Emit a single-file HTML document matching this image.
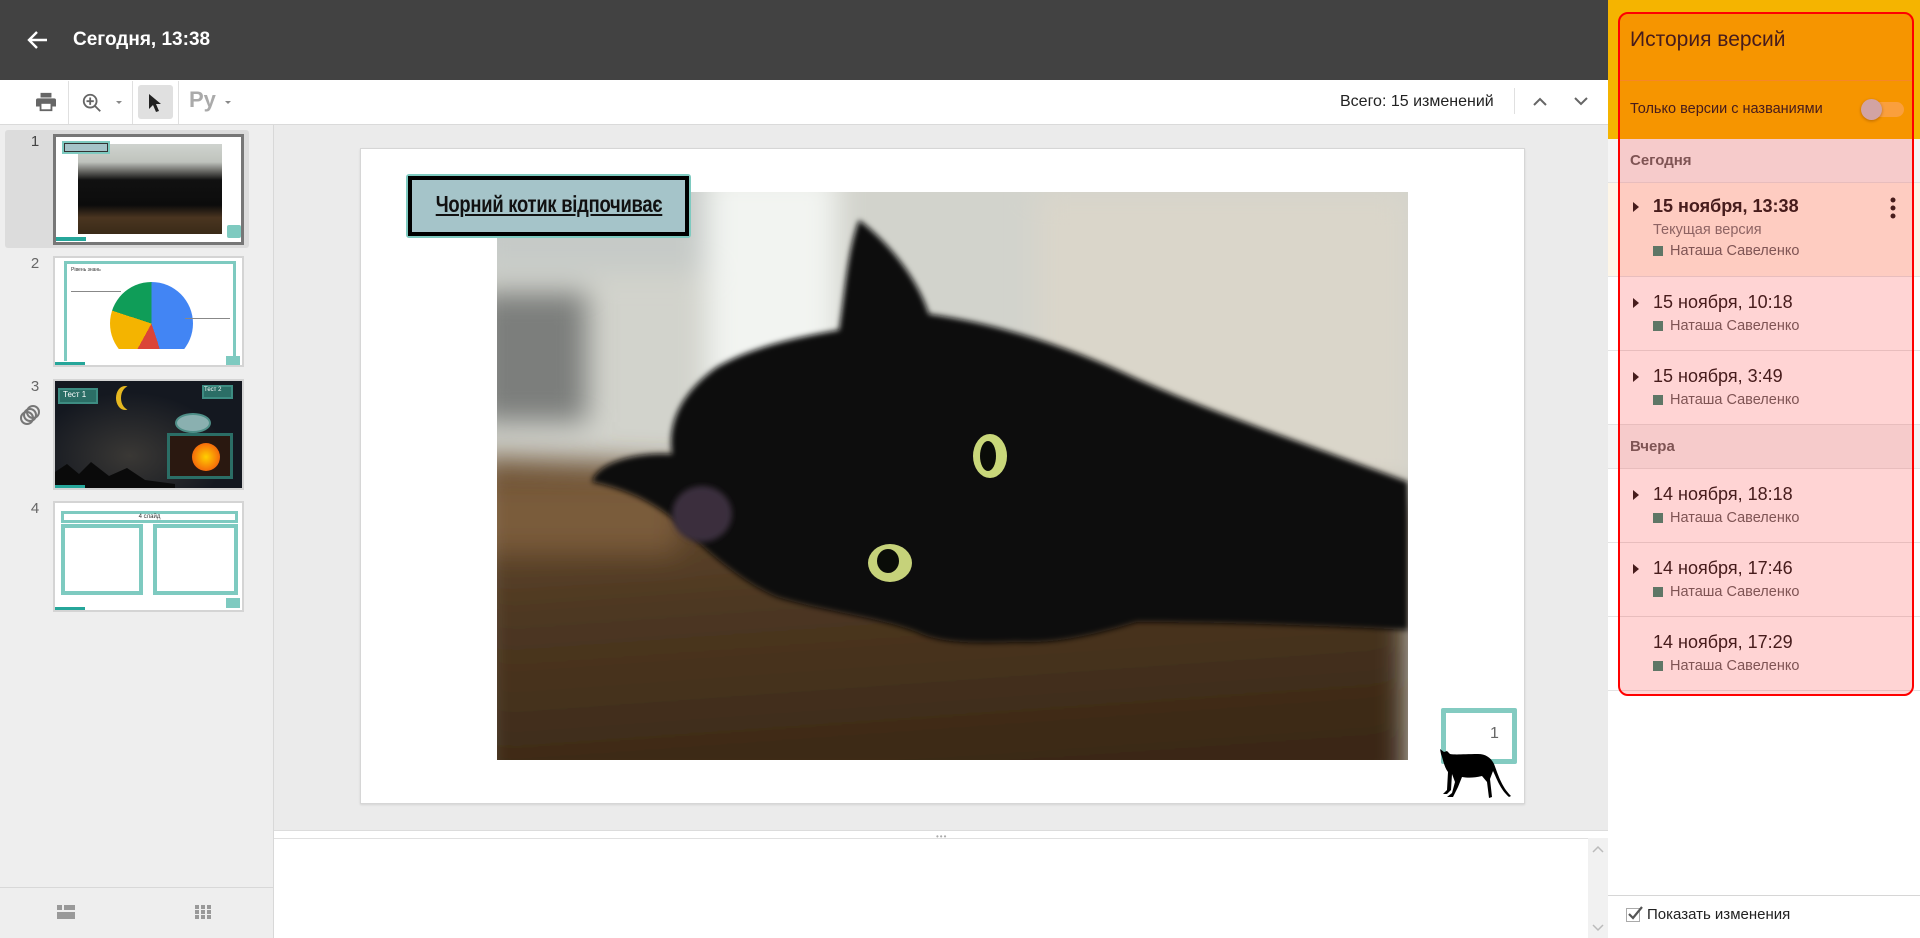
<!DOCTYPE html>
<html><head><meta charset="utf-8">
<style>
*{box-sizing:border-box;margin:0;padding:0}
body{width:1920px;height:938px;overflow:hidden;position:relative;font-family:"Liberation Sans",Arial,sans-serif;background:#fff}
.a{position:absolute}
.top{left:0;top:0;width:1608px;height:80px;background:#424242}
.title{left:73px;top:29px;color:#fff;font-size:19px;font-weight:bold}
.tb{left:0;top:80px;width:1608px;height:45px;background:#fff;border-bottom:1px solid #dadada}
.sep{width:1px;background:#e0e0e0}
.left{left:0;top:125px;width:274px;height:813px;background:#eeeeee;border-right:1px solid #d8d8d8}
.main{left:274px;top:125px;width:1334px;height:705px;background:#ebebeb}
.num{font-size:15px;color:#444;width:20px;text-align:center}
.th{left:53px;width:191px;height:111px;background:#fff;border:2px solid #d4d4d4;overflow:hidden}
.rp{left:1608px;top:0;width:312px;height:938px;background:#fff}
.row{position:absolute;left:1608px;width:312px;border-bottom:1px solid #e4e4e4}
.dt{position:absolute;left:45px;font-size:18px;color:#222}
.nm{position:absolute;left:45px;font-size:14.5px;color:#666}
.sq:before{content:"";display:inline-block;width:10px;height:10px;background:#3f8f7b;margin-right:7px;vertical-align:-1px}
.tri{position:absolute;left:25px;width:0;height:0;border-top:5px solid transparent;border-bottom:5px solid transparent;border-left:6px solid #222}
</style></head><body>

<div class="a top"></div>
<svg class="a" style="left:26px;top:30px" width="22" height="20" viewBox="0 0 22 20"><path d="M21 10H3M11 2L3 10l8 8" stroke="#fff" stroke-width="2.4" fill="none"/></svg>
<div class="a title">Сегодня, 13:38</div>

<div class="a tb"></div>
<svg class="a" style="left:35px;top:92px" width="22" height="20" viewBox="0 0 24 22"><path d="M6 1h12v5H6z M3 7h18a2 2 0 0 1 2 2v7h-4v5H5v-5H1V9a2 2 0 0 1 2-2z" fill="#666"/><rect x="7" y="13" width="10" height="6" fill="#fff"/></svg>
<div class="a sep" style="left:68px;top:81px;height:43px"></div>
<svg class="a" style="left:81px;top:92px" width="22" height="22" viewBox="0 0 24 24"><circle cx="10" cy="10" r="7" stroke="#666" stroke-width="2" fill="none"/><path d="M15 15l6 6M10 6v8M6 10h8" stroke="#666" stroke-width="2"/></svg>
<div class="a" style="left:116px;top:101px;border-left:3px solid transparent;border-right:3px solid transparent;border-top:3px solid #888"></div>
<div class="a sep" style="left:132px;top:81px;height:43px"></div>
<div class="a" style="left:138px;top:85px;width:35px;height:34px;background:#e0e0e0;border-radius:3px"></div>
<svg class="a" style="left:148px;top:93px" width="14" height="20" viewBox="0 0 14 20"><path d="M1 1v15l4-4 3 7 3-1-3-7h5z" fill="#222"/></svg>
<div class="a sep" style="left:178px;top:81px;height:43px"></div>
<div class="a" style="left:189px;top:87px;font-size:22px;font-weight:bold;color:#aaa">Ру</div>
<div class="a" style="left:225px;top:101px;border-left:3px solid transparent;border-right:3px solid transparent;border-top:3px solid #888"></div>
<div class="a" style="left:1340px;top:93px;font-size:16px;color:#222">Всего: 15 изменений</div>
<div class="a sep" style="left:1514px;top:88px;height:26px"></div>
<svg class="a" style="left:1533px;top:97px" width="14" height="9" viewBox="0 0 14 9"><path d="M1 8l6-6 6 6" stroke="#666" stroke-width="2" fill="none"/></svg>
<svg class="a" style="left:1574px;top:97px" width="14" height="9" viewBox="0 0 14 9"><path d="M1 1l6 6 6-6" stroke="#666" stroke-width="2" fill="none"/></svg>

<div class="a left"></div>
<div class="a" style="left:5px;top:130px;width:244px;height:118px;background:#dcdcdc;border-radius:3px"></div>
<div class="a num" style="left:25px;top:133px">1</div>
<div class="a num" style="left:25px;top:255px;color:#666">2</div>
<div class="a num" style="left:25px;top:378px;color:#666">3</div>
<div class="a num" style="left:25px;top:500px;color:#666">4</div>
<svg class="a" style="left:19px;top:404px" width="22" height="22" viewBox="0 0 22 22"><circle cx="8" cy="14" r="6" stroke="#777" stroke-width="2" fill="none"/><circle cx="11" cy="11" r="6" stroke="#777" stroke-width="2" fill="none"/><circle cx="14" cy="8" r="6" stroke="#777" stroke-width="2" fill="none"/></svg>

<!-- thumb1 -->
<div class="a th" style="top:134px;border:3px solid #777">
 <div class="a" style="left:22px;top:7px;width:144px;height:90px;background:linear-gradient(180deg,#cfd3cf 0,#bfc3bd 20%,#6a6a66 30%,#111 40%,#0c0c0c 68%,#4a3520 82%,#3a2a18 100%)"></div>
 <div class="a" style="left:6px;top:4px;width:48px;height:13px;background:#a5c4c9;border:2px solid #7ecac0;outline:1px solid #333;outline-offset:-3px"></div>
 <div class="a" style="left:0;top:100px;width:30px;height:4px;background:#26a69a"></div>
 <div class="a" style="left:171px;top:88px;width:14px;height:13px;background:#7ecac0;border-radius:2px"></div>
</div>
<!-- thumb2 -->
<div class="a th" style="top:256px">
 <div class="a" style="left:9px;top:3px;width:172px;height:100px;border:3px solid #7ecac0;border-bottom:none"></div>
 <div class="a" style="left:16px;top:9px;font-size:5px;color:#333">Рівень знань</div>
 <div class="a" style="left:55px;top:24px;width:83px;height:83px;border-radius:50%;background:conic-gradient(#4285f4 0 45%,#db4437 45% 58%,#f4b400 58% 80%,#0f9d58 80% 100%);clip-path:inset(0 0 16px 0)"></div>
 <div class="a" style="left:16px;top:33px;width:50px;height:1px;background:#888"></div>
 <div class="a" style="left:130px;top:60px;width:45px;height:1px;background:#888"></div>
 <div class="a" style="left:0;top:104px;width:30px;height:4px;background:#26a69a"></div>
 <div class="a" style="left:171px;top:98px;width:14px;height:10px;background:#7ecac0"></div>
</div>
<!-- thumb3 -->
<div class="a th" style="top:379px;background:radial-gradient(ellipse at 40% 70%,#3a3835,#141820 60%)">
 <div class="a" style="left:0;top:75px;width:120px;height:40px;background:#0a0a0a;clip-path:polygon(0 40%,10% 20%,20% 45%,30% 15%,45% 50%,60% 30%,75% 60%,100% 70%,100% 100%,0 100%)"></div>
 <div class="a" style="left:3px;top:7px;width:40px;height:16px;background:#2b6e66;border:2px solid #3d8c82;color:#fff;font-size:8px;padding-left:3px">Тест 1</div>
 <div class="a" style="left:66px;top:5px;width:18px;height:24px;border-radius:50%;box-shadow:-5px 0 0 0 #e6b820"></div>
 <div class="a" style="left:147px;top:4px;width:31px;height:14px;background:#2b6e66;border:2px solid #3d8c82;color:#fff;font-size:6px">Тест 2</div>
 <div class="a" style="left:120px;top:32px;width:36px;height:20px;border-radius:50%;background:#8ab0b0;border:2px solid #4f8f88"></div>
 <div class="a" style="left:112px;top:52px;width:66px;height:46px;border:3px solid #2b6e66;background:#2a1810"></div>
 <div class="a" style="left:137px;top:62px;width:28px;height:28px;border-radius:50%;background:radial-gradient(#ffd000,#f04010)"></div>
 <div class="a" style="left:0;top:104px;width:30px;height:4px;background:#26a69a"></div>
</div>
<!-- thumb4 -->
<div class="a th" style="top:501px">
 <div class="a" style="left:6px;top:8px;width:177px;height:12px;border:3px solid #7ecac0;font-size:6px;text-align:center;line-height:7px;color:#333">4 слайд</div>
 <div class="a" style="left:6px;top:21px;width:82px;height:71px;border:4px solid #7ecac0"></div>
 <div class="a" style="left:98px;top:21px;width:85px;height:71px;border:4px solid #7ecac0"></div>
 <div class="a" style="left:0;top:104px;width:30px;height:4px;background:#26a69a"></div>
 <div class="a" style="left:171px;top:95px;width:14px;height:10px;background:#7ecac0"></div>
</div>
<div class="a" style="left:0;top:887px;width:274px;height:1px;background:#d8d8d8"></div>
<svg class="a" style="left:57px;top:905px" width="18" height="14" viewBox="0 0 18 14"><rect x="0" y="0" width="5" height="5" fill="#999"/><rect x="7" y="0" width="11" height="5" fill="#999"/><rect x="0" y="7" width="18" height="7" fill="#999"/></svg>
<svg class="a" style="left:195px;top:905px" width="16" height="14" viewBox="0 0 16 14"><g fill="#999"><rect x="0" y="0" width="4" height="4"/><rect x="6" y="0" width="4" height="4"/><rect x="12" y="0" width="4" height="4"/><rect x="0" y="5" width="4" height="4"/><rect x="6" y="5" width="4" height="4"/><rect x="12" y="5" width="4" height="4"/><rect x="0" y="10" width="4" height="4"/><rect x="6" y="10" width="4" height="4"/><rect x="12" y="10" width="4" height="4"/></g></svg>

<!-- main -->
<div class="a main"></div>
<div class="a" style="left:360px;top:148px;width:1165px;height:656px;background:#fff;border:1px solid #d6d6d6;box-shadow:0 1px 2px rgba(0,0,0,.1)"></div>
<svg class="a" style="left:497px;top:192px" width="911" height="568" viewBox="0 0 911 568" preserveAspectRatio="none">
 <defs><filter id="b" x="-20%" y="-20%" width="140%" height="140%"><feGaussianBlur stdDeviation="14"/></filter>
 <filter id="b2"><feGaussianBlur stdDeviation="3"/></filter>
 <linearGradient id="fl" x1="0" y1="0" x2="0.2" y2="1"><stop offset="0" stop-color="#6e5234"/><stop offset=".45" stop-color="#4e3822"/><stop offset="1" stop-color="#3a2816"/></linearGradient></defs>
 <rect width="911" height="568" fill="#d2d3cc"/>
 <g filter="url(#b)">
  <rect x="540" y="0" width="371" height="300" fill="#dad6ca"/>
  <rect x="210" y="-20" width="130" height="320" fill="#f2f4f1"/>
  <rect x="-20" y="100" width="110" height="130" fill="#7b7e7b"/>
  <rect x="-20" y="-20" width="230" height="100" fill="#c6cac7"/>
  <path d="M-20 265L911 300V600H-20z" fill="url(#fl)"/>
  <rect x="-20" y="290" width="200" height="70" fill="#7a5b3a"/>
 </g>
 <g filter="url(#b2)">
 <path d="M362 28C385 45 418 80 432 122C490 130 560 150 625 180C700 215 790 245 911 290V438C800 432 700 430 640 430C600 442 560 452 520 450C470 452 440 450 420 440C380 425 330 420 280 405C245 390 210 360 180 330C150 305 120 295 95 290C100 270 140 260 175 262C170 230 185 200 220 175C255 155 300 145 342 138C348 100 350 60 362 28Z" fill="#0b0b0d"/>
 </g>
 <ellipse cx="205" cy="322" rx="30" ry="28" fill="#3a2f3c" filter="url(#b2)"/>
 <ellipse cx="493" cy="264" rx="17" ry="22" fill="#c9d77a"/>
 <ellipse cx="491" cy="264" rx="8" ry="15" fill="#0a0c08"/>
 <ellipse cx="393" cy="371" rx="22" ry="19" fill="#c6d27a"/>
 <ellipse cx="391" cy="369" rx="11" ry="12" fill="#0a0c08"/>
</svg>
<div class="a" style="left:406px;top:174px;width:285px;height:64px;border:2px solid #7ecac0;border-radius:3px"></div>
<div class="a" style="left:408px;top:176px;width:281px;height:60px;background:#a5c4c9;border:4px solid #000;overflow:visible;white-space:nowrap;font-family:'Liberation Sans Narrow','Liberation Sans',sans-serif;font-size:23px;color:#111">
 <span class="a" style="left:50%;top:11px;white-space:nowrap;transform:translateX(-50%) scaleX(.8);text-decoration:underline;font-weight:bold;letter-spacing:-0.3px">Чорний котик відпочиває</span>
</div>
<div class="a" style="left:1441px;top:708px;width:76px;height:56px;border:5px solid rgba(90,185,172,.75);border-radius:2px"></div>
<div class="a" style="left:1490px;top:725px;font-size:16px;color:#666">1</div>
<svg class="a" style="left:1440px;top:747px" width="72" height="58" viewBox="0 0 72 58"><path d="M0 2l4 3 3-1 3 3c6 1 14 0 28 0 8 0 13 4 16 10 4 10 7 22 17 32l-2 1C60 42 57 32 53 24l-3 8 2 18-3 1-2-16-5-6c-8 2-14 2-20 1l-4 10-5 10H7l5-4 3-11-3-8-1 16-4 4H3l4-4 1-18C4 20 3 12 1 7z" fill="#000"/></svg>

<!-- notes -->
<div class="a" style="left:274px;top:830px;width:1334px;height:1px;background:#dcdcdc"></div>
<div class="a" style="left:936px;top:832px;font-size:8px;color:#aaa;letter-spacing:1px">•••</div>
<div class="a" style="left:274px;top:838px;width:1334px;height:100px;background:#fff;border-top:1px solid #e0e0e0"></div>
<div class="a" style="left:1588px;top:838px;width:20px;height:100px;background:#f1f1f1"></div>
<svg class="a" style="left:1592px;top:845px" width="12" height="8"><path d="M1 7l5-5 5 5" stroke="#bbb" fill="none" stroke-width="1.5"/></svg>
<svg class="a" style="left:1592px;top:924px" width="12" height="8"><path d="M1 1l5 5 5-5" stroke="#bbb" fill="none" stroke-width="1.5"/></svg>

<!-- right panel -->
<div class="a rp"></div>
<div class="a" style="left:1608px;top:0;width:312px;height:139px;background:#f5b400"></div>
<div class="a" style="left:1618px;top:80px;width:296px;height:1px;background:#f6a230"></div>
<div class="a" style="left:1630px;top:28px;font-size:21px;color:#222">История версий</div>
<div class="a" style="left:1630px;top:101px;font-size:14.5px;color:#222">Только версии с названиями</div>
<div class="a" style="left:1864px;top:102px;width:40px;height:15px;border-radius:8px;background:#f9c04a"></div>
<div class="a" style="left:1861px;top:99px;width:21px;height:21px;border-radius:50%;background:#c9c4c4;box-shadow:0 1px 3px rgba(0,0,0,.3)"></div>

<div class="row" style="top:139px;height:44px;background:#f5f5f5"><div class="a" style="left:22px;top:13px;font-size:15px;font-weight:bold;color:#666">Сегодня</div></div>
<div class="row" style="top:183px;height:94px;background:#fef6e8">
 <div class="tri" style="top:19px"></div><div class="dt" style="top:13px;font-weight:bold">15 ноября, 13:38</div>
 <div class="nm" style="top:39px;color:#777">Текущая версия</div>
 <div class="nm sq" style="top:60px" >Наташа Савеленко</div>
 <svg class="a" style="left:282px;top:14px" width="6" height="22"><circle cx="3" cy="3" r="2.5" fill="#222"/><circle cx="3" cy="11" r="2.5" fill="#222"/><circle cx="3" cy="19" r="2.5" fill="#222"/></svg>
</div>
<div class="row" style="top:277px;height:74px"><div class="tri" style="top:21px"></div><div class="dt" style="top:15px">15 ноября, 10:18</div><div class="nm sq" style="top:41px">Наташа Савеленко</div></div>
<div class="row" style="top:351px;height:74px"><div class="tri" style="top:21px"></div><div class="dt" style="top:15px">15 ноября, 3:49</div><div class="nm sq" style="top:41px">Наташа Савеленко</div></div>
<div class="row" style="top:425px;height:44px;background:#f5f5f5"><div class="a" style="left:22px;top:13px;font-size:15px;font-weight:bold;color:#666">Вчера</div></div>
<div class="row" style="top:469px;height:74px"><div class="tri" style="top:21px"></div><div class="dt" style="top:15px">14 ноября, 18:18</div><div class="nm sq" style="top:41px">Наташа Савеленко</div></div>
<div class="row" style="top:543px;height:74px"><div class="tri" style="top:21px"></div><div class="dt" style="top:15px">14 ноября, 17:46</div><div class="nm sq" style="top:41px">Наташа Савеленко</div></div>
<div class="row" style="top:617px;height:74px"><div class="dt" style="top:15px">14 ноября, 17:29</div><div class="nm sq" style="top:41px">Наташа Савеленко</div></div>

<div class="a" style="left:1618px;top:12px;width:296px;height:684px;border:2px solid #f00;border-radius:10px;background:rgba(255,0,0,.17)"></div>

<div class="a" style="left:1608px;top:895px;width:312px;height:1px;background:#d6d6d6"></div>
<div class="a" style="left:1626px;top:908px;width:14px;height:14px;border:1px solid #aaa;background:#fff"></div>
<svg class="a" style="left:1627px;top:905px" width="16" height="16"><path d="M2 9l4 4 9-11" stroke="#555" stroke-width="2.2" fill="none"/></svg>
<div class="a" style="left:1647px;top:906px;font-size:15px;color:#222">Показать изменения</div>
</body></html>
